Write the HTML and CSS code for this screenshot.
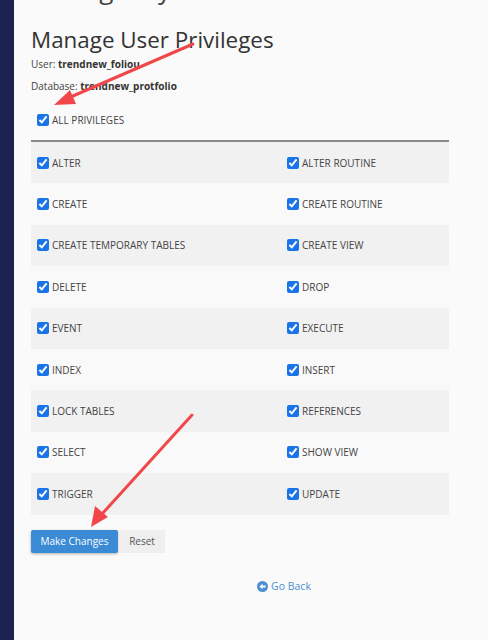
FILE: index.html
```html
<!DOCTYPE html>
<html lang="en">

<head>
    <meta charset="UTF-8">
    <meta name="viewport" content="width=device-width, initial-scale=1.0">
    <title>Manage User Privileges</title>
    <link rel="stylesheet" href="styles.css">
</head>

<body>

    <div class="sidebar"></div>

    <div class="content">
        <h1 class="page-title">Manage My Databases</h1>

        <h2>Manage User Privileges</h2>
        <p class="meta">User: <b>trendnew_foliou</b></p>
        <p class="meta">Database: <b>trendnew_protfolio</b></p>

        <form class="privileges">
            <label class="check all">
                <input type="checkbox" checked> ALL PRIVILEGES
            </label>

            <div class="grid">
                <div class="row">
                    <label class="check"><input type="checkbox" checked> ALTER</label>
                    <label class="check"><input type="checkbox" checked> ALTER ROUTINE</label>
                </div>
                <div class="row">
                    <label class="check"><input type="checkbox" checked> CREATE</label>
                    <label class="check"><input type="checkbox" checked> CREATE ROUTINE</label>
                </div>
                <div class="row">
                    <label class="check"><input type="checkbox" checked> CREATE TEMPORARY TABLES</label>
                    <label class="check"><input type="checkbox" checked> CREATE VIEW</label>
                </div>
                <div class="row">
                    <label class="check"><input type="checkbox" checked> DELETE</label>
                    <label class="check"><input type="checkbox" checked> DROP</label>
                </div>
                <div class="row">
                    <label class="check"><input type="checkbox" checked> EVENT</label>
                    <label class="check"><input type="checkbox" checked> EXECUTE</label>
                </div>
                <div class="row">
                    <label class="check"><input type="checkbox" checked> INDEX</label>
                    <label class="check"><input type="checkbox" checked> INSERT</label>
                </div>
                <div class="row">
                    <label class="check"><input type="checkbox" checked> LOCK TABLES</label>
                    <label class="check"><input type="checkbox" checked> REFERENCES</label>
                </div>
                <div class="row">
                    <label class="check"><input type="checkbox" checked> SELECT</label>
                    <label class="check"><input type="checkbox" checked> SHOW VIEW</label>
                </div>
                <div class="row">
                    <label class="check"><input type="checkbox" checked> TRIGGER</label>
                    <label class="check"><input type="checkbox" checked> UPDATE</label>
                </div>
            </div>

            <div class="actions">
                <button type="submit" class="btn-primary">Make Changes</button>
                <button type="reset" class="btn-default">Reset</button>
            </div>
        </form>

        <div class="go-back">
            <a href="#">
                <svg width="11" height="11" viewBox="0 0 10 10">
                    <circle cx="5" cy="5" r="5" fill="#4a8fd2" />
                    <path d="M2.2 5 L5 2.6 L5 4 L7.8 4 L7.8 6 L5 6 L5 7.4 Z" fill="#fff" />
                </svg>
                Go Back
            </a>
        </div>
    </div>

    <!-- red hint arrows -->
    <svg class="arrows" width="488" height="640" viewBox="0 0 488 640">
        <line x1="193" y1="44" x2="66" y2="99" stroke="#f2474a" stroke-width="3" stroke-linecap="round" />
        <polygon points="54,105 70,90 76,104" fill="#f2474a" />
        <line x1="192" y1="415" x2="102" y2="514" stroke="#f2474a" stroke-width="3" stroke-linecap="round" />
        <polygon points="91,527 95,506 108,517" fill="#f2474a" />
    </svg>

</body>

</html>
```

FILE: styles.css
```css
* {
    margin: 0;
    padding: 0;
    box-sizing: border-box;
    font-family: "Open Sans", Arial, sans-serif;
}

body {
    display: flex;
    min-height: 100vh;
    background: #fafafa;
    color: #333;
    overflow: hidden;
}

.sidebar {
    width: 14px;
    flex-shrink: 0;
    background: #1e2251;
}

.content {
    flex: 1;
    padding-left: 17px;
}

.page-title {
    font-size: 26px;
    font-weight: 400;
    line-height: 36px;
    margin-top: -29px;
    color: #444;
}

h2 {
    font-size: 22.4px;
    font-weight: 400;
    line-height: 30px;
    margin-top: 18px;
    color: #333;
}

.meta {
    font-size: 10px;
    line-height: 14px;
    color: #444;
    margin-top: 2px;
}

.meta + .meta {
    margin-top: 8px;
}

.meta b {
    font-weight: 700;
    color: #333;
}

.check {
    display: flex;
    align-items: center;
    gap: 3px;
    font-size: 10px;
    color: #444;
}

.check input {
    width: 12px;
    height: 12px;
    margin: 0;
    accent-color: #1a74e8;
}

.all {
    margin-top: 19px;
    padding-left: 6px;
    height: 16px;
}

.grid {
    width: 418px;
    margin-top: 12px;
    border-top: 2px solid #8a8a8a;
}

.row {
    display: grid;
    grid-template-columns: 250px 1fr;
    height: 41.4px;
    align-items: center;
    padding-left: 6px;
    background: #f9f9f9;
}

.row:nth-child(odd) {
    background: #f1f1f1;
}

.actions {
    display: flex;
    gap: 1px;
    margin-top: 15px;
}

.actions button {
    height: 23px;
    border: none;
    font-size: 10px;
    cursor: pointer;
}

.btn-primary {
    width: 87px;
    background: #3a8ad6;
    color: #fff;
    border-radius: 2px;
    box-shadow: 0 1px 3px rgba(0, 0, 0, 0.3);
}

.btn-default {
    width: 46px;
    background: #efefef;
    color: #555;
}

.go-back {
    text-align: center;
    padding-left: 49px;
    margin-top: 22px;
}

.go-back a {
    display: inline-flex;
    align-items: center;
    gap: 3px;
    font-size: 10.5px;
    color: #4a8fd2;
    text-decoration: none;
}

.arrows {
    position: absolute;
    top: 0;
    left: 0;
    pointer-events: none;
}
```
